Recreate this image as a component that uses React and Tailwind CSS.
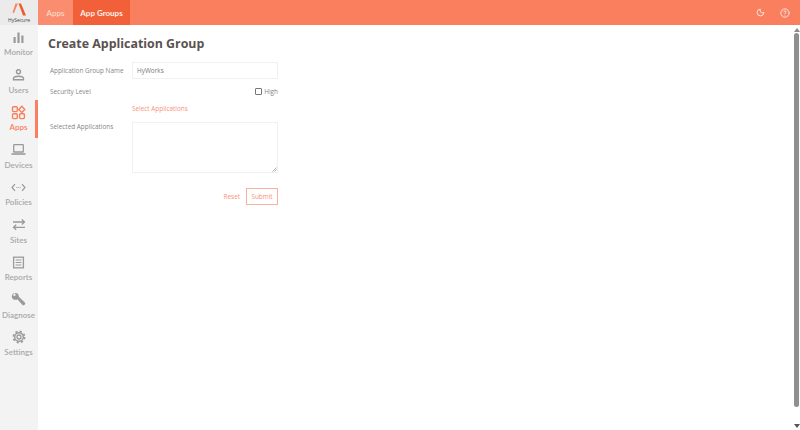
import React from "react";
import { Moon, CircleHelp } from "lucide-react";

const MonitorIcon = () => (
  <svg width="13" height="13" viewBox="0 0 13 13" fill="currentColor">
    <rect x="1.5" y="6" width="2.2" height="6" />
    <rect x="5.4" y="1.5" width="2.2" height="10.5" />
    <rect x="9.3" y="4.5" width="2.2" height="7.5" />
  </svg>
);

const UsersIcon = () => (
  <svg width="13" height="13" viewBox="0 0 13 13" fill="none" stroke="currentColor" strokeWidth="1.4">
    <circle cx="6.5" cy="3.8" r="2" />
    <path d="M1.5 11.8v-1.3c0-1.4 2-2.2 5-2.2s5 .8 5 2.2v1.3z" />
  </svg>
);

const AppsIcon = () => (
  <svg width="15" height="15" viewBox="0 0 15 15" fill="none" stroke="currentColor" strokeWidth="1.4">
    <rect x="1.5" y="1.8" width="4.8" height="4.8" rx="1" />
    <path d="M10.8 1.2l3 3.2-3 3.2-3-3.2z" />
    <rect x="1.5" y="8.8" width="4.8" height="4.8" rx="1" />
    <rect x="8.6" y="8.8" width="4.8" height="4.8" rx="1" />
  </svg>
);

const DevicesIcon = () => (
  <svg width="15" height="13" viewBox="0 0 15 13" fill="none" stroke="currentColor" strokeWidth="1.3">
    <rect x="2.7" y="1.7" width="9.6" height="7.3" rx="0.6" />
    <path d="M0.5 11h14" strokeWidth="1.6" />
  </svg>
);

const PoliciesIcon = () => (
  <svg width="15" height="13" viewBox="0 0 15 13" fill="none" stroke="currentColor" strokeWidth="1.2">
    <path d="M4 3.2L1 6.5l3 3.3M11 3.2l3 3.3-3 3.3" />
    <path d="M5.4 6.5h4.4" strokeDasharray="1 0.9" />
  </svg>
);

const SitesIcon = () => (
  <svg width="14" height="13" viewBox="0 0 14 13" fill="none" stroke="currentColor" strokeWidth="1.3">
    <path d="M1 4h11.5M9.8 1.5l2.7 2.5-2.7 2.5" />
    <path d="M13 9.3H1.5M4.2 6.8L1.5 9.3l2.7 2.5" />
  </svg>
);

const ReportsIcon = () => (
  <svg width="13" height="13" viewBox="0 0 13 13" fill="none" stroke="currentColor" strokeWidth="1.3">
    <rect x="1.6" y="1.2" width="9.8" height="10.6" />
    <path d="M3.6 4h5.8M3.6 6.5h5.8M3.6 9h5.8" strokeWidth="1" />
  </svg>
);

const DiagnoseIcon = () => (
  <svg width="15" height="15" viewBox="0 0 15 15" fill="currentColor">
    <circle cx="4.3" cy="4.4" r="3.4" />
    <path d="M5 5.8l2-1.8 6.8 6.6c.6.6.6 1.3.1 1.8l-.6.6c-.5.5-1.2.5-1.8-.1z" />
    <circle cx="3.4" cy="2.7" r="1.2" fill="#f3f3f3" />
  </svg>
);

const SettingsIcon = () => (
  <svg width="14" height="14" viewBox="0 0 14 14" fill="none" stroke="currentColor">
    <circle cx="7" cy="7" r="2" strokeWidth="1.3" />
    <circle cx="7" cy="7" r="4.3" strokeWidth="1.4" />
    <circle cx="7" cy="7" r="5.6" strokeWidth="1.7" strokeDasharray="2.2 2.2" />
  </svg>
);

const navItems = [
  { label: "Monitor", icon: MonitorIcon },
  { label: "Users", icon: UsersIcon },
  { label: "Apps", icon: AppsIcon, active: true },
  { label: "Devices", icon: DevicesIcon },
  { label: "Policies", icon: PoliciesIcon },
  { label: "Sites", icon: SitesIcon },
  { label: "Reports", icon: ReportsIcon },
  { label: "Diagnose", icon: DiagnoseIcon },
  { label: "Settings", icon: SettingsIcon },
];

const App = () => {
  return (
    <div className="flex h-[430px] w-[800px] overflow-hidden bg-white font-['Open_Sans',sans-serif]">
      {/* Sidebar */}
      <div className="flex w-[38px] shrink-0 flex-col bg-[#f3f3f3]">
        <div className="flex h-[25px] flex-col items-center bg-[#ebebeb]">
          <svg width="16" height="15" viewBox="0 0 16 15" className="mt-[3px]">
            <path d="M4.5 0.5 L6.8 0.5 L3 10 L1.5 9.5 Z" fill="#f9825f" />
            <path d="M7.5 0.5 L10 0.5 L15 12.5 L12 12.5 Z" fill="#ee5a32" />
          </svg>
          <span className="mt-[0px] text-[5px] leading-[5px] text-[#444]">HySecure</span>
        </div>
        <div className="flex flex-col">
          {navItems.map(({ label, icon: Icon, active }) => (
            <div
              key={label}
              className={`flex h-[37.5px] flex-col items-center justify-center border-r-[3px] pl-[2px] ${
                active ? "border-[#f97f5f] text-[#f97f5f]" : "border-transparent text-[#a8a8a8]"
              }`}
            >
              <span className={`flex h-[14px] items-center ${active ? "text-[#f97f5f]" : "text-[#9a9a9a]"}`}>
                <Icon />
              </span>
              <span className="mt-[3px] font-['Lato',sans-serif] text-[8px] leading-[10px] font-semibold">{label}</span>
            </div>
          ))}
        </div>
      </div>

      <div className="flex min-w-0 flex-1 flex-col">
        {/* Top bar */}
        <div className="flex h-[25px] shrink-0 items-center bg-[#f97f5f] font-['Lato',sans-serif] text-[8px]">
          <div className="flex h-full w-[35px] items-center justify-center bg-[#fa8d70] text-[#fde0d6]">Apps</div>
          <div className="flex h-full w-[57px] items-center justify-center bg-[#f2603a] font-bold text-[#fff1ec]">App Groups</div>
          <div className="ml-auto flex items-center gap-[15px] pr-[10px] text-[#fde4dc]">
            <Moon size={9} strokeWidth={2.6} />
            <CircleHelp size={10} strokeWidth={2.4} />
          </div>
        </div>

        <div className="flex min-h-0 flex-1">
          {/* Form */}
          <div className="flex-1 pt-[10px] pl-[10px]">
            <h1 className="text-[12.4px] leading-[18px] font-bold text-[#5a5251]">Create Application Group</h1>
            <div className="mt-[9px] w-[230px] text-[6.4px] text-[#858585]">
              <div className="flex items-center">
                <label className="w-[84px] pl-[2px]">Application Group Name</label>
                <input
                  readOnly
                  value="HyWorks"
                  className="h-[17px] w-[146px] border border-[#f1f1f1] px-[4px] text-[6.4px] text-[#777] outline-none"
                />
              </div>
              <div className="mt-[8px] flex items-center justify-between">
                <label className="pl-[2px]">Security Level</label>
                <label className="flex items-center gap-[2px]">
                  <input
                    type="checkbox"
                    readOnly
                    className="m-0 h-[7px] w-[7px] appearance-none rounded-[1px] border border-[#767676] bg-white"
                  />
                  High
                </label>
              </div>
              <div className="mt-[7px] pl-[84px] text-[#f9917a]">Select Applications</div>
              <div className="mt-[9px] flex items-start">
                <label className="w-[84px] pl-[2px]">Selected Applications</label>
                <div className="relative flex h-[51px] w-[146px]">
                  <textarea readOnly className="h-full w-full resize-none border border-[#f1f1f1] outline-none" />
                  <svg width="5" height="5" viewBox="0 0 5 5" className="absolute right-[1px] bottom-[1px]" stroke="#9a9a9a" strokeWidth="0.8">
                    <path d="M0.5 4.5L4.5 0.5M2.5 4.5L4.5 2.5" />
                  </svg>
                </div>
              </div>
              <div className="mt-[15px] flex items-center justify-end gap-[6px] text-[#f9917a]">
                <span>Reset</span>
                <button className="h-[17px] w-[32px] border border-[#f9b09c] text-[6.4px]">Submit</button>
              </div>
            </div>
          </div>

          {/* Scrollbar */}
          <div className="flex w-[7px] shrink-0 flex-col items-center">
            <div className="mt-[3px] h-0 w-0 border-x-[3px] border-b-[4px] border-x-transparent border-b-[#8a8a8a]" />
            <div className="mt-[1px] h-[374px] w-[5px] rounded-[3px] bg-[#8f8f8f]" />
            <div className="mt-auto mb-[2px] h-0 w-0 border-x-[3px] border-t-[4px] border-x-transparent border-t-[#555]" />
          </div>
        </div>
      </div>
    </div>
  );
};

export default App;
